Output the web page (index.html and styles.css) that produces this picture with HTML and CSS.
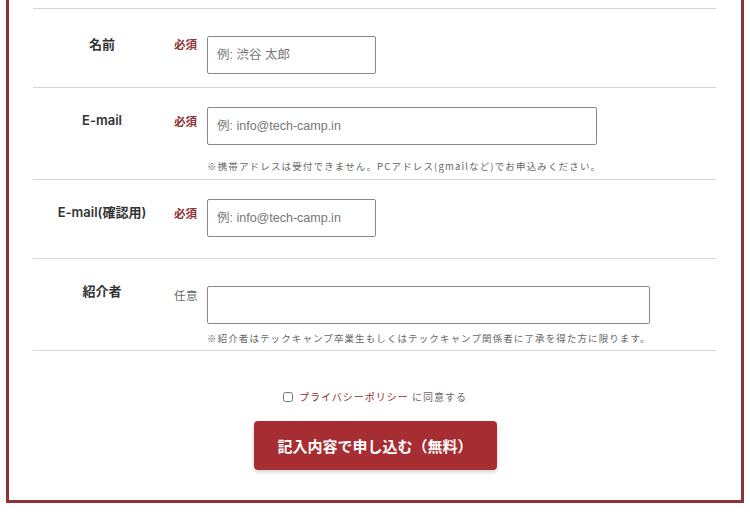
FILE: index.html
```html
<!DOCTYPE html>
<html lang="ja">
<head>
<meta charset="utf-8">
<link rel="stylesheet" href="styles.css">
</head>
<body>
<div class="frame">
  <div class="form">
    <div class="row row--first">
      <div class="label">名前</div>
      <div class="badge req">必須</div>
      <div class="field"><input class="input input--short" type="text" placeholder="例: 渋谷 太郎"></div>
    </div>
    <div class="row row--note">
      <div class="label">E-mail</div>
      <div class="badge req">必須</div>
      <div class="field">
        <input class="input input--wide" type="text" placeholder="例: info@tech-camp.in">
        <p class="note note--mail">※携帯アドレスは受付できません。PCアドレス(gmailなど)でお申込みください。</p>
      </div>
    </div>
    <div class="row">
      <div class="label">E-mail(確認用)</div>
      <div class="badge req">必須</div>
      <div class="field"><input class="input input--short" type="text" placeholder="例: info@tech-camp.in"></div>
    </div>
    <div class="row row--note row--last">
      <div class="label">紹介者</div>
      <div class="badge opt">任意</div>
      <div class="field">
        <input class="input input--ref" type="text">
        <p class="note note--ref">※紹介者はテックキャンプ卒業生もしくはテックキャンプ関係者に了承を得た方に限ります。</p>
      </div>
    </div>
  </div>
  <div class="agree">
    <label class="agree-label"><input class="check" type="checkbox"><span class="link">プライバシーポリシー</span>&nbsp;に同意する</label>
  </div>
  <div class="submit-wrap">
    <button class="submit" type="button">記入内容で申し込む（無料）</button>
  </div>
</div>
</body>
</html>
```

FILE: styles.css
```css
html, body {
  margin: 0;
  padding: 0;
  background: #ffffff;
}
body {
  font-family: "Liberation Sans", "Noto Sans CJK JP", sans-serif;
  color: #333;
  overflow: hidden;
}
.frame {
  box-sizing: border-box;
  width: 738px;
  margin: -20px 0 0 6px;
  border: 3px solid #8e3236;
  padding: 25px 0 30px;
  background: #fff;
}
.form {
  margin: 0 25px 0 24px;
}
.row {
  display: grid;
  grid-template-columns: 138px 36px 1fr;
  align-items: start;
  border-top: 1px solid #d6d6d6;
  height: 78px;
  box-sizing: content-box;
}
.row--note {
  height: 91px;
}
.row--last {
  border-bottom: 1px solid #d6d6d6;
}
.label {
  margin-top: 22px;
  text-align: center;
  font-family: "Inter", "Noto Sans CJK JP", sans-serif;
  font-weight: 600;
  font-size: 13px;
  line-height: 20px;
  color: #333;
}
.badge {
  margin-top: 24px;
  padding-left: 3px;
  font-family: "Noto Sans CJK JP", sans-serif;
  font-size: 11.5px;
  line-height: 18px;
}
.req {
  color: #8e3236;
  font-weight: 700;
}
.opt {
  color: #666;
  font-weight: 400;
  letter-spacing: 0.5px;
  margin-top: 27px;
}
.field {
  margin-top: 19px;
}
.row--first .label {
  margin-top: 25px;
}
.row--first .badge {
  margin-top: 26px;
}
.row--first .field {
  margin-top: 27px;
}
.row--last .field {
  margin-top: 27px;
}
.input {
  display: block;
  box-sizing: border-box;
  height: 38px;
  border: 1px solid #8a8a8a;
  border-radius: 2px;
  padding: 0 9px;
  font-family: "Liberation Sans", "Noto Sans CJK JP", sans-serif;
  font-size: 12.5px;
  color: #333;
  background: #fff;
  margin: 0;
}
.input::placeholder {
  color: #777;
}
.input--short {
  width: 169px;
}
.input--wide {
  width: 390px;
}
.input--ref {
  width: 443px;
}
.note {
  margin: 14px 0 0;
  font-family: "Noto Sans CJK JP", sans-serif;
  font-size: 9.5px;
  line-height: 14px;
  letter-spacing: 1.1px;
  color: #666;
  white-space: nowrap;
}
.note--mail {
  margin-top: 14px;
  letter-spacing: 1.15px;
}
.note--ref {
  margin-top: 7px;
}
.agree {
  margin-top: 38px;
  display: flex;
  justify-content: center;
}
.agree-label {
  display: flex;
  align-items: center;
  font-family: "Noto Sans CJK JP", sans-serif;
  font-size: 10px;
  line-height: 16px;
  letter-spacing: 1px;
  color: #666;
}
.check {
  width: 10px;
  height: 10px;
  margin: 0 6px 0 0;
}
.link {
  color: #8e3236;
}
.submit-wrap {
  margin-top: 16px;
  display: flex;
  justify-content: center;
}
.submit {
  width: 243px;
  height: 49px;
  border: none;
  border-radius: 4px;
  background: #a62d31;
  color: #fff;
  font-family: "Noto Sans CJK JP", sans-serif;
  font-weight: 700;
  font-size: 15px;
  box-shadow: 0 2px 4px rgba(0,0,0,0.18);
  padding: 0;
}
```
